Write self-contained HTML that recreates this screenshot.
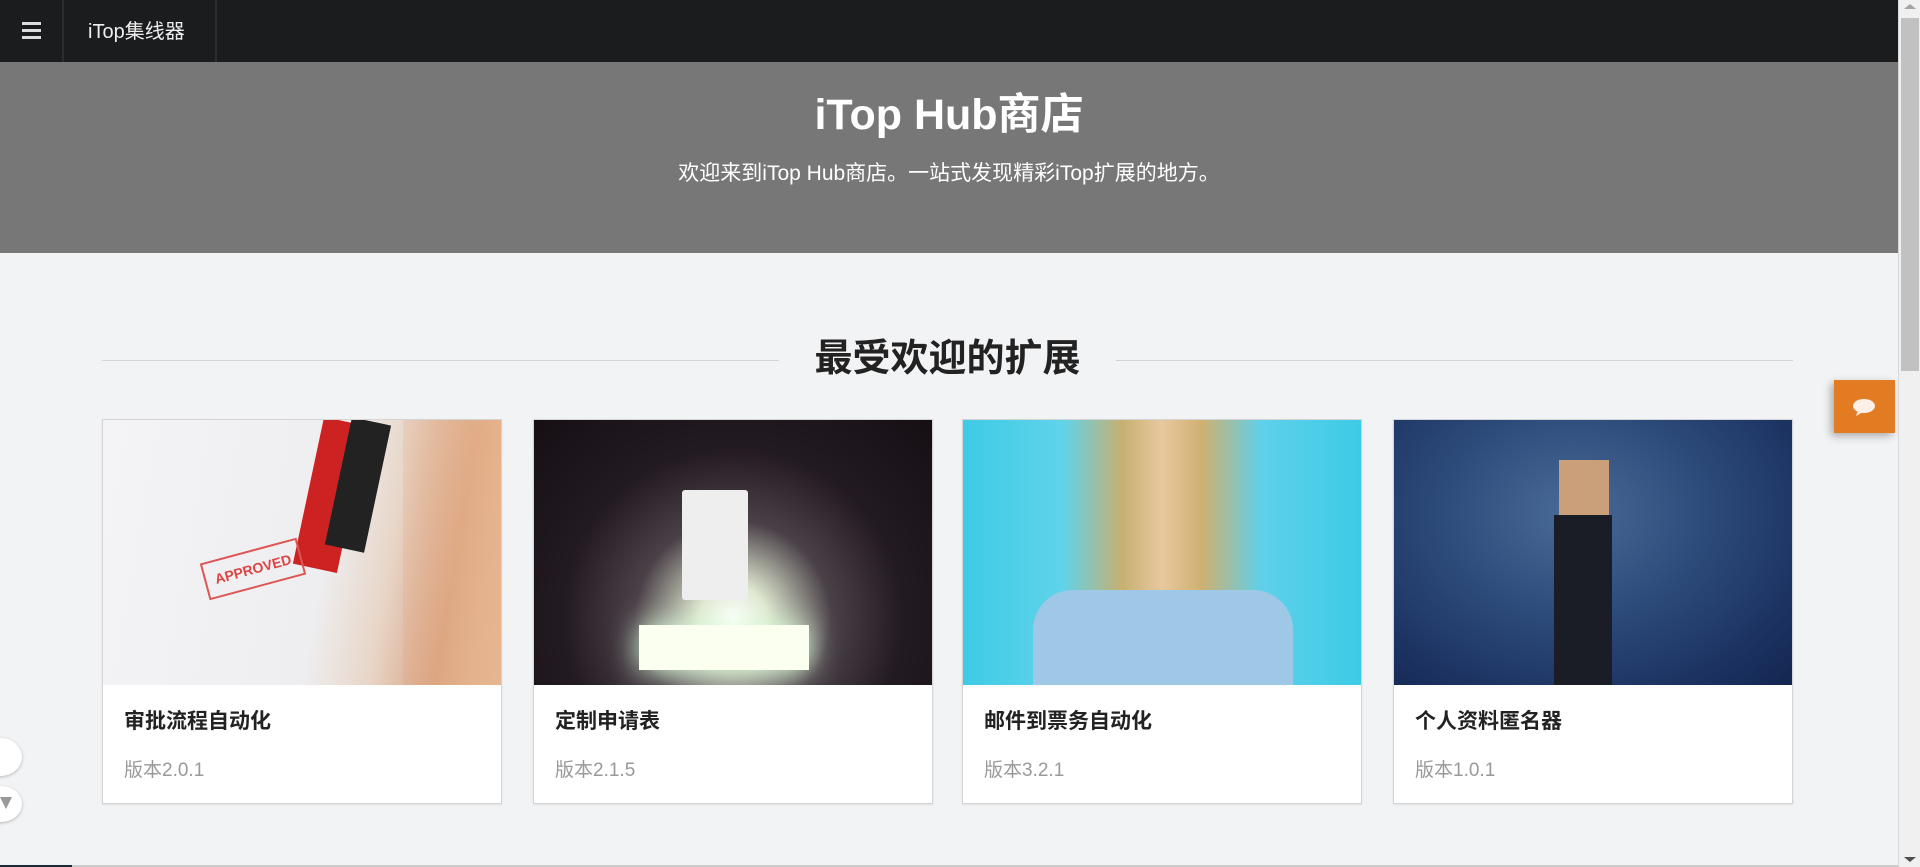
<!DOCTYPE html>
<html><head><meta charset="utf-8"><style>
*{margin:0;padding:0;box-sizing:border-box}
body{width:1920px;height:867px;overflow:hidden;background:#f2f3f5;font-family:"Liberation Sans","Noto Sans CJK SC",sans-serif;position:relative}
.nav{position:absolute;left:0;top:0;width:1898px;height:62px;background:#1b1c1e}
.ham{position:absolute;left:0;top:0;width:64px;height:62px;border-right:2px solid #2c2d30}
.ham i{position:absolute;left:22px;width:19px;height:3px;background:#ddd}
.brand{position:absolute;left:64px;top:0;width:153px;height:62px;border-right:2px solid #2c2d30;color:#eee;font-size:20px;line-height:64px;padding-left:24px}
.hero{position:absolute;left:0;top:62px;width:1898px;height:191px;background:#777;color:#fff;text-align:center}
.hero h1{font-size:43px;font-weight:bold;margin-top:27px;line-height:52px}
.hero p{font-size:21px;margin-top:16px}
.sec{position:absolute;left:102px;top:334px;width:1691px;height:50px}
.sec .l{position:absolute;top:26px;height:1px;background:#d3d4d6;width:677px}
.sec h2{position:absolute;left:0;width:100%;text-align:center;font-size:38px;font-weight:bold;color:#222;line-height:50px}
.card{position:absolute;top:419px;width:400px;height:385px;background:#fff;border:1px solid #d4d4d4;box-shadow:0 1px 2px rgba(0,0,0,.08);overflow:hidden}
.img{height:265px;position:relative;overflow:hidden}
.card h3{font-size:21px;font-weight:bold;color:#222;margin:20px 0 0 21px}
.card p{font-size:19px;color:#999;margin:20px 0 0 21px}
.sb{position:absolute;left:1898px;top:0;width:22px;height:867px;background:#f0f0f0;border-left:1px solid #d8d8d8}
.thumb{position:absolute;left:2px;top:18px;width:18px;height:353px;background:#c1c1c1}
.chat{position:absolute;left:1834px;top:380px;width:61px;height:53px;background:#e27c22;box-shadow:-3px 3px 8px rgba(0,0,0,.3)}
.circ{position:absolute;left:-20px;width:42px;border-radius:50%;background:#fff;box-shadow:0 1px 3px rgba(0,0,0,.25)}
</style></head><body>
<div class="nav"><div class="ham"><i style="top:22px"></i><i style="top:29px"></i><i style="top:36px"></i></div><div class="brand">iTop集线器</div></div>
<div class="hero"><h1>iTop Hub商店</h1><p>欢迎来到iTop Hub商店。一站式发现精彩iTop扩展的地方。</p></div>
<div class="sec"><div class="l" style="left:0"></div><div class="l" style="right:0"></div><h2>最受欢迎的扩展</h2></div>

<div class="card" style="left:102px"><div class="img" style="background:linear-gradient(100deg,#f4f4f6 0%,#eeeef0 55%,#e8d6c8 70%,#d9a080 85%,#e9c0a0 100%)">
<div style="position:absolute;left:205px;top:0;width:45px;height:150px;background:#c22;transform:rotate(12deg)"></div>
<div style="position:absolute;left:235px;top:0;width:40px;height:130px;background:#222;transform:rotate(12deg)"></div>
<div style="position:absolute;left:100px;top:130px;width:100px;height:38px;border:2px solid #d55;color:#d44;font-size:14px;font-weight:bold;line-height:34px;text-align:center;transform:rotate(-15deg)">APPROVED</div>
<div style="position:absolute;left:300px;top:0;width:100px;height:265px;background:linear-gradient(90deg,rgba(220,160,120,.2),rgba(230,180,140,.8))"></div>
</div><h3>审批流程自动化</h3><p>版本2.0.1</p></div>

<div class="card" style="left:533px"><div class="img" style="background:radial-gradient(ellipse at 50% 75%,#fff 0,#dfe8d0 12%,#4a4048 35%,#231a22 60%,#150f14 100%)">
<div style="position:absolute;left:148px;top:70px;width:66px;height:110px;background:#eee;border-radius:3px"></div>
<div style="position:absolute;left:105px;top:205px;width:170px;height:45px;background:#fafff0;box-shadow:0 0 30px #dfd"></div>
</div><h3>定制申请表</h3><p>版本2.1.5</p></div>

<div class="card" style="left:962px"><div class="img" style="background:linear-gradient(90deg,#3ecbe6 0%,#5fd3ea 25%,#c8b070 40%,#e8c8a0 50%,#cfb070 60%,#5fd0ea 75%,#3ccbe6 100%)">
<div style="position:absolute;left:70px;top:170px;width:260px;height:95px;background:#9fc8e6;border-radius:40px 40px 0 0"></div>
</div><h3>邮件到票务自动化</h3><p>版本3.2.1</p></div>

<div class="card" style="left:1393px"><div class="img" style="background:radial-gradient(ellipse at 45% 35%,#4a6a98 0,#2e4d7c 40%,#1b3160 80%,#132650 100%)">
<div style="position:absolute;left:165px;top:40px;width:50px;height:55px;background:#c9a07a"></div>
<div style="position:absolute;left:160px;top:95px;width:58px;height:170px;background:#1a1d26"></div>
</div><h3>个人资料匿名器</h3><p>版本1.0.1</p></div>

<div class="chat"><svg width="61" height="53"><ellipse cx="30" cy="26" rx="11" ry="7" fill="#fdf0e6"/><path d="M24 31 L22 36 L29 32Z" fill="#fdf0e6"/></svg></div>
<div class="circ" style="top:738px;height:38px"></div>
<div class="circ" style="top:786px;height:36px"><svg width="42" height="36" style="position:absolute;left:0;top:0"><path d="M20 11 L32 11 L26 23Z" fill="#999"/></svg></div>
<div style="position:absolute;left:0;top:865px;width:72px;height:2px;background:#1b2a3a"></div>
<div style="position:absolute;left:72px;top:865px;width:1826px;height:2px;background:#ccc"></div>
<div class="sb"><div class="thumb"></div>
<svg width="22" height="867" style="position:absolute;left:0;top:0"><path d="M5 9 L11 4 L17 9Z" fill="#a3a3a3"/><path d="M5 857 L11 862 L17 857Z" fill="#505050"/></svg></div>
</body></html>
